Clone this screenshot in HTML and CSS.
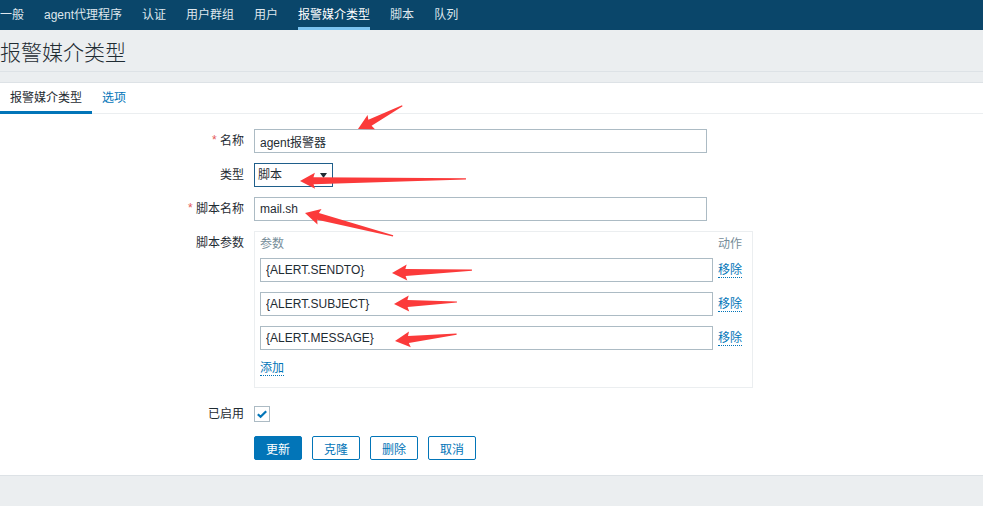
FILE: index.html
```html
<!DOCTYPE html>
<html lang="zh">
<head>
<meta charset="utf-8">
<title>报警媒介类型</title>
<link rel="stylesheet" href="styles.css">
</head>
<body>
<nav class="topnav">
  <a class="nav-item">一般</a>
  <a class="nav-item">agent代理程序</a>
  <a class="nav-item">认证</a>
  <a class="nav-item">用户群组</a>
  <a class="nav-item">用户</a>
  <a class="nav-item active">报警媒介类型</a>
  <a class="nav-item">脚本</a>
  <a class="nav-item">队列</a>
</nav>
<header class="page-header">
  <h1 class="page-title">报警媒介类型</h1>
</header>
<main class="container">
  <div class="tabs">
    <span class="tab active">报警媒介类型</span>
    <span class="tab link">选项</span>
  </div>
  <form class="form">
    <div class="row">
      <label class="label"><span class="req">*</span> 名称</label>
      <input class="text-input wide" type="text" value="agent报警器">
    </div>
    <div class="row">
      <label class="label">类型</label>
      <div class="select">
        <span>脚本</span>
        <svg class="select-arrow" width="7" height="5" viewBox="0 0 7 5"><path d="M0 0H7L3.5 5Z" fill="#1f2c33"/></svg>
      </div>
    </div>
    <div class="row">
      <label class="label"><span class="req">*</span> 脚本名称</label>
      <input class="text-input wide" type="text" value="mail.sh">
    </div>
    <div class="row">
      <label class="label">脚本参数</label>
      <div class="params">
        <div class="params-head">
          <span class="col-main">参数</span>
          <span class="col-act">动作</span>
        </div>
        <div class="param-row first">
          <input class="text-input param" type="text" value="{ALERT.SENDTO}">
          <a class="dotted-link">移除</a>
        </div>
        <div class="param-row">
          <input class="text-input param" type="text" value="{ALERT.SUBJECT}">
          <a class="dotted-link">移除</a>
        </div>
        <div class="param-row">
          <input class="text-input param" type="text" value="{ALERT.MESSAGE}">
          <a class="dotted-link">移除</a>
        </div>
        <div class="add-row"><a class="dotted-link">添加</a></div>
      </div>
    </div>
    <div class="row enabled-row">
      <label class="label">已启用</label>
      <span class="checkbox">
        <svg width="14" height="14" viewBox="0 0 14 14"><path d="M2.8 7.2 L5.6 9.8 L11.2 4.2" fill="none" stroke="#0275b8" stroke-width="2.2"/></svg>
      </span>
    </div>
    <div class="row buttons-row">
      <span class="label"></span>
      <div class="buttons">
        <button type="button" class="btn primary">更新</button>
        <button type="button" class="btn">克隆</button>
        <button type="button" class="btn">删除</button>
        <button type="button" class="btn">取消</button>
      </div>
    </div>
  </form>
</main>
<svg class="annotations" width="983" height="506" viewBox="0 0 983 506">
  <g fill="#fb3a3a">
    <polygon transform="translate(358,129) rotate(-27.6)" points="0,0 15,-8 13.5,-3.5 50,-0.6 50,0.6 13.5,3.5 15,8"/>
    <polygon transform="translate(300,181) rotate(-0.7)" points="0,0 15,-8 13.5,-3.5 166,-0.6 166,0.6 13.5,3.5 15,8"/>
    <polygon transform="translate(305,213) rotate(14.6)" points="0,0 15,-8 13.5,-3.5 91,-0.6 91,0.6 13.5,3.5 15,8"/>
    <polygon transform="translate(392,273) rotate(-2.1)" points="0,0 15,-8 13.5,-3.5 80,-0.6 80,0.6 13.5,3.5 15,8"/>
    <polygon transform="translate(394,304) rotate(-1.8)" points="0,0 15,-8 13.5,-3.5 63,-0.6 63,0.6 13.5,3.5 15,8"/>
    <polygon transform="translate(395,341) rotate(-6.4)" points="0,0 15,-8 13.5,-3.5 62,-0.6 62,0.6 13.5,3.5 15,8"/>
  </g>
</svg>
</body>
</html>
```

FILE: styles.css
```css
* { box-sizing: border-box; }

html, body {
  margin: 0;
  padding: 0;
}

body {
  background: #ebeef0;
  font-family: "Liberation Sans", "Noto Sans CJK SC", sans-serif;
  font-size: 12px;
  color: #1f2c33;
  width: 983px;
  height: 506px;
  overflow: hidden;
  position: relative;
}

/* top navigation */
.topnav {
  display: flex;
  gap: 20px;
  height: 30px;
  background: #0a466a;
}

.nav-item {
  display: block;
  height: 30px;
  line-height: 30px;
  color: #dfe7ed;
  white-space: nowrap;
}

.nav-item.active {
  color: #ffffff;
  box-shadow: inset 0 -3px 0 #7bc3f0;
}

/* page header */
.page-header {
  height: 42px;
  border-bottom: 1px solid #dde2e6;
  padding-top: 4px;
}

.page-title {
  margin: 0;
  font-size: 21px;
  font-weight: 300;
  line-height: 37px;
  color: #1f2c33;
}

/* white container */
.container {
  margin-top: 10px;
  background: #ffffff;
  border-top: 1px solid #dde2e6;
  border-bottom: 1px solid #dde2e6;
  padding-bottom: 15px;
}

.tabs {
  display: flex;
  height: 31px;
  border-bottom: 1px solid #ebeef0;
}

.tab {
  display: block;
  height: 30px;
  line-height: 30px;
  padding: 0 10px;
}

.tab.active {
  height: 31px;
  box-shadow: inset 0 -3px 0 #0275b8;
}

.tab.link {
  color: #0275b8;
}

/* form */
.form {
  display: flex;
  flex-direction: column;
  gap: 10px;
  padding-top: 15px;
}

.row {
  display: flex;
  align-items: flex-start;
  gap: 10px;
}

.label {
  width: 244px;
  flex: none;
  text-align: right;
  line-height: 24px;
}

.req {
  color: #e45959;
  position: relative;
  top: -1px;
}

.text-input {
  display: block;
  height: 24px;
  border: 1px solid #acbbc4;
  padding: 0 5px;
  font-family: "Liberation Sans", "Noto Sans CJK SC", sans-serif;
  font-size: 12px;
  color: #1f2c33;
  background: #ffffff;
  outline: none;
  margin: 0;
}

.text-input.wide,
.text-input.param {
  width: 453px;
}

.select {
  width: 79px;
  height: 24px;
  border: 1px solid #1f5f8b;
  padding: 0 5px 0 3px;
  display: flex;
  align-items: center;
  justify-content: space-between;
  line-height: 22px;
}

/* parameters table */
.params {
  width: 499px;
  border: 1px solid #ebeef0;
  padding: 5px 5px 11px 5px;
}

.params-head {
  display: flex;
  line-height: 14px;
  color: #768d99;
}

.col-main {
  width: 458px;
}

.param-row {
  display: flex;
  align-items: center;
  gap: 5px;
  margin-top: 10px;
}

.param-row.first {
  margin-top: 7px;
}

.dotted-link {
  color: #0275b8;
  border-bottom: 1px dotted #0275b8;
  line-height: 13px;
  display: inline-block;
  margin-top: 2px;
}

.add-row {
  margin-top: 10px;
  line-height: 16px;
}

.enabled-row {
  margin-top: 4px;
}

.checkbox {
  margin-top: 4px;
  width: 16px;
  height: 16px;
  border: 1px solid #acbbc4;
  display: flex;
  align-items: center;
  justify-content: center;
}

.buttons-row {
  margin-top: 0;
}

.buttons {
  display: flex;
  gap: 10px;
}

.btn {
  width: 48px;
  height: 24px;
  border: 1px solid #0275b8;
  border-radius: 2px;
  background: #ffffff;
  color: #0275b8;
  font-family: "Liberation Sans", "Noto Sans CJK SC", sans-serif;
  font-size: 12px;
  padding: 0;
  margin: 0;
}

.btn.primary {
  background: #0275b8;
  color: #ffffff;
}

/* red annotation arrows drawn over the screenshot */
.annotations {
  position: absolute;
  left: 0;
  top: 0;
  pointer-events: none;
}
```
